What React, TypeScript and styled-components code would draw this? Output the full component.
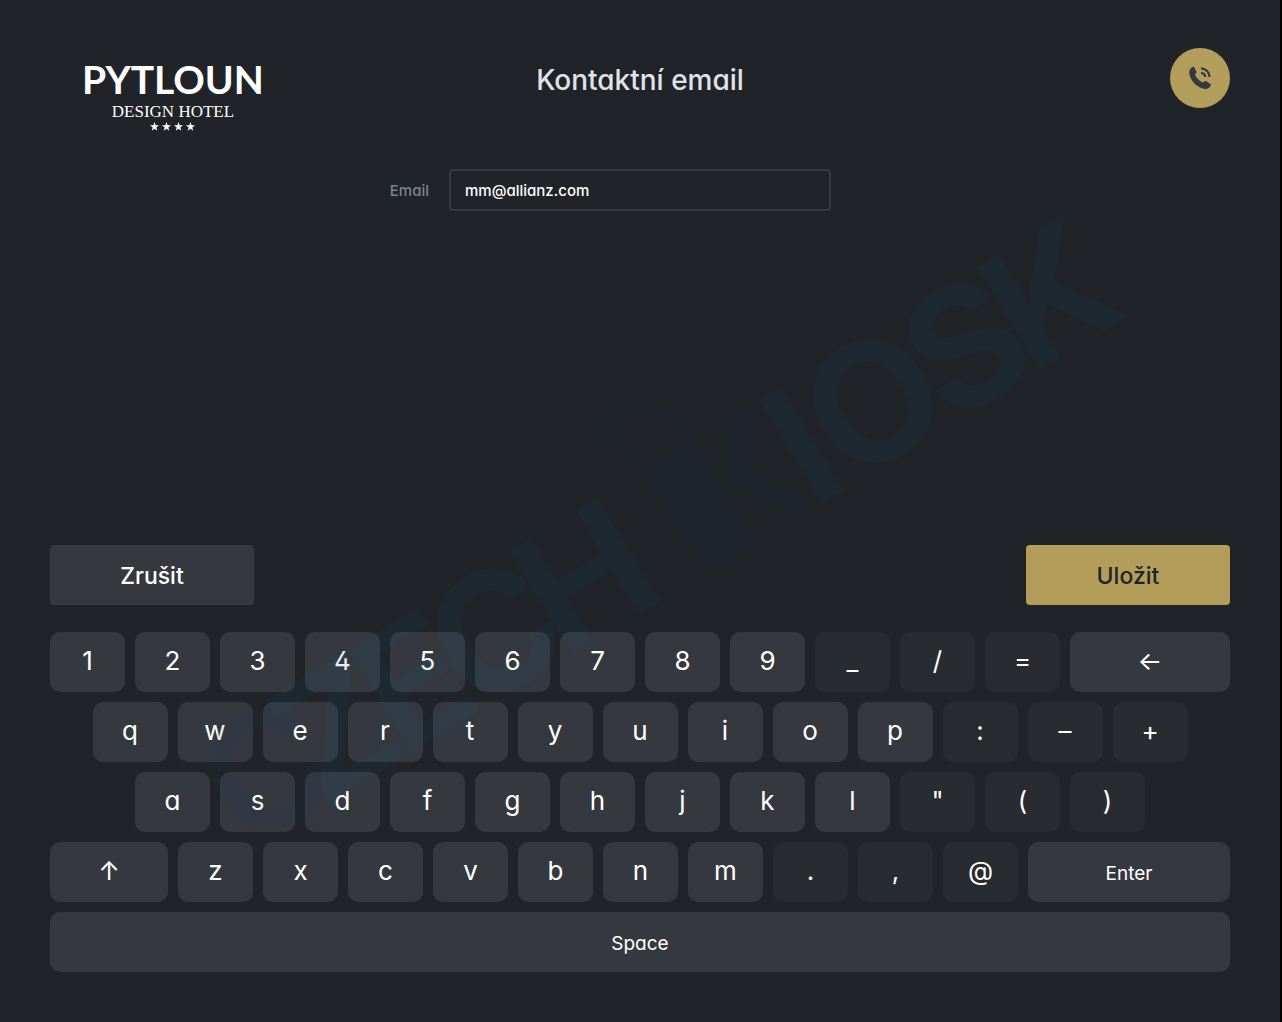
import React, { useState } from "react";
import styled, { createGlobalStyle, css } from "styled-components";

const GlobalStyle = createGlobalStyle`
  *, *::before, *::after { box-sizing: border-box; }
  body {
    margin: 0;
    background: #202327;
    color: #ffffff;
    font-family: Inter, "Open Sans", sans-serif;
    font-feature-settings: "cv11", "cv02";
  }
  button, input { font: inherit; font-feature-settings: inherit; color: inherit; }
`;

const Page = styled.div`
  position: relative;
  display: flex;
  flex-direction: column;
  min-height: 100vh;
  padding: 48px 50px 50px;
  border-right: 2px solid #000000;
  background: #202327;
`;

const Header = styled.header`
  display: grid;
  grid-template-columns: 1fr auto 1fr;
  align-items: start;
`;

const Brand = styled.div`
  display: flex;
  flex-direction: column;
  align-items: center;
  justify-self: start;
  margin: 8px 0 0 32px;
`;

const BrandName = styled.span`
  font: 700 39px/46px Lato, sans-serif;
`;

const BrandTagline = styled.span`
  font: 400 17px/20px "Liberation Serif", serif;
`;

const Stars = styled.svg`
  display: block;
`;

const Title = styled.h1`
  margin: 0;
  padding-top: 12px;
  font-size: 28px;
  line-height: 40px;
  font-weight: 500;
  color: #dfe3e8;
`;

const CallButton = styled.button`
  display: flex;
  align-items: center;
  justify-content: center;
  justify-self: end;
  width: 60px;
  height: 60px;
  padding: 0;
  border: 0;
  border-radius: 50%;
  background: #b39d5b;
  color: #35393f;
`;

const Form = styled.form`
  display: flex;
  flex: 1;
  flex-direction: column;
  padding-top: 38px;
`;

const Field = styled.div`
  display: grid;
  grid-template-columns: 1fr minmax(0, 382px) 1fr;
  column-gap: 20px;
  align-items: center;
  margin-bottom: auto;
`;

const Label = styled.label`
  justify-self: end;
  font-size: 15px;
  font-weight: 500;
  color: #7d8388;
`;

const TextInput = styled.input`
  width: 100%;
  height: 42px;
  padding: 0 14px;
  border: 2px solid #35383e;
  border-radius: 4px;
  outline: 0;
  background: transparent;
  font-size: 15px;
  font-weight: 500;
`;

const Actions = styled.div`
  display: flex;
  justify-content: space-between;
  margin: 24px 0 27px;
`;

const ActionButton = styled.button<{ $primary?: boolean }>`
  width: 204px;
  height: 60px;
  padding: 2px 0 0;
  border: 0;
  border-radius: 4px;
  font-size: 23px;
  font-weight: 500;
  background: ${(p) => (p.$primary ? "#b39d5b" : "#35393f")};
  color: ${(p) => (p.$primary ? "#202327" : "#ffffff")};
`;

const Keyboard = styled.div`
  display: flex;
  flex-direction: column;
  gap: 10px;
`;

const KeyRow = styled.div`
  display: flex;
  justify-content: center;
  gap: 10px;
`;

const Key = styled.button<{ $grow?: number; $dim?: boolean; $word?: boolean }>`
  flex: ${(p) => (p.$grow ? `${p.$grow} 1 0` : "0 1 75px")};
  min-width: 0;
  height: 60px;
  border: 0;
  border-radius: 10px;
  background: ${(p) => (p.$dim ? "#282b2f" : "#35393f")};
  ${(p) =>
    p.$word
      ? css`
          padding: 2px 0 0;
          font-size: 19px;
        `
      : css`
          padding: 0 0 4px;
          font-size: 26px;
        `}
`;

const Watermark = styled.svg`
  position: absolute;
  inset: 0;
  width: 100%;
  height: 100%;
  pointer-events: none;
`;

const WatermarkLetter = styled.text<{ $violet?: boolean }>`
  font: 700 167px Inter, sans-serif;
  text-anchor: middle;
  fill: ${(p) => (p.$violet ? "#1c3478" : "#056197")};
`;

const letters = [
  { char: "C", x: -453, violet: true },
  { char: "Z", x: -372 },
  { char: "E", x: -282 },
  { char: "C", x: -187 },
  { char: "H", x: -81 },
  { char: "I", x: 172 },
  { char: "O", x: 256 },
  { char: "S", x: 364 },
  { char: "K", x: 464 },
];

type KeySpec = { label: string; grow?: number; dim?: boolean; word?: boolean; name?: string };

const plain = (chars: string): KeySpec[] => chars.split("").map((label) => ({ label }));
const dim = (chars: string): KeySpec[] => chars.split("").map((label) => ({ label, dim: true }));

const rows: KeySpec[][] = [
  [...plain("123456789"), ...dim("_/="), { label: "←", grow: 1, name: "Backspace" }],
  [...plain("qwertyuiop"), ...dim(":–+")],
  [...plain("asdfghjkl"), ...dim('"()')],
  [
    { label: "↑", grow: 118, name: "Shift" },
    ...plain("zxcvbnm"),
    ...dim(".,@"),
    { label: "Enter", grow: 202, word: true },
  ],
  [{ label: "Space", grow: 1, word: true }],
];

const star = "M4.5 0 5.6 3.2 9 3.3 6.3 5.4 7.3 8.7 4.5 6.8 1.7 8.7 2.7 5.4 0 3.3 3.4 3.2Z";

function PhoneIcon() {
  return (
    <svg width="24" height="24" viewBox="0 0 24 24" aria-hidden="true">
      <path
        fill="currentColor"
        d="M6 1 8.3 5.2C8.7 6 8.6 6.6 8 7.2L6.9 8.6C8 11.5 11.5 15.3 15 16.6L16.6 15.4C17.2 15 17.8 15 18.5 15.4L22.4 18C23 18.4 23 19 22.6 19.6 21.5 22 19.5 23.2 17 23 9 22 1.5 14 1.2 6.5 1.2 3.8 2.8 1.8 4.8.8 5.3.6 5.7.6 6 1Z"
      />
      <path
        fill="none"
        stroke="currentColor"
        strokeWidth="2.2"
        d="M13 2.4A8.6 8.6 0 0 1 21.6 11M13 6.8A4.2 4.2 0 0 1 17.2 11"
      />
    </svg>
  );
}

export default function App() {
  const [email, setEmail] = useState("mm@allianz.com");
  const [upper, setUpper] = useState(false);

  const press = (key: KeySpec) => {
    if (key.name === "Backspace") setEmail((v) => v.slice(0, -1));
    else if (key.name === "Shift") setUpper((v) => !v);
    else if (key.label === "Space") setEmail((v) => v + " ");
    else if (key.label !== "Enter") setEmail((v) => v + (upper ? key.label.toUpperCase() : key.label));
  };

  return (
    <>
      <GlobalStyle />
      <Page>
        <Header>
          <Brand>
            <BrandName>PYTLOUN</BrandName>
            <BrandTagline>DESIGN HOTEL</BrandTagline>
            <Stars width="45" height="9" viewBox="0 0 45 9" fill="#ffffff" aria-hidden="true">
              {[0, 12, 24, 36].map((x) => (
                <path key={x} d={star} transform={`translate(${x} 0)`} />
              ))}
            </Stars>
          </Brand>
          <Title>Kontaktní email</Title>
          <CallButton type="button" aria-label="Zavolat">
            <PhoneIcon />
          </CallButton>
        </Header>
        <Form onSubmit={(e) => e.preventDefault()}>
          <Field>
            <Label htmlFor="email">Email</Label>
            <TextInput id="email" value={email} onChange={(e) => setEmail(e.target.value)} />
          </Field>
          <Actions>
            <ActionButton type="button">Zrušit</ActionButton>
            <ActionButton type="submit" $primary>
              Uložit
            </ActionButton>
          </Actions>
        </Form>
        <Keyboard>
          {rows.map((row, i) => (
            <KeyRow key={i}>
              {row.map((key) => (
                <Key
                  key={key.label}
                  type="button"
                  aria-label={key.name}
                  $grow={key.grow}
                  $dim={key.dim}
                  $word={key.word}
                  onClick={() => press(key)}
                >
                  {upper && !key.word ? key.label.toUpperCase() : key.label}
                </Key>
              ))}
            </KeyRow>
          ))}
        </Keyboard>
        <Watermark viewBox="0 0 1280 1022" aria-hidden="true">
          <g opacity="0.08">
            <g transform="translate(640 511) rotate(-31.3)">
              {letters.map((l) => (
                <WatermarkLetter key={l.x} x={l.x} y={88} $violet={l.violet}>
                  {l.char}
                </WatermarkLetter>
              ))}
            </g>
            <path
              d="M638 465Q672 458 694 437L757 542Q738 565 705 573Z"
              fill="#1e286e"
            />
            <path
              d="M638 463Q622 444 592 437Q612 412 642 407Q672 412 691 438"
              fill="none"
              stroke="#1e286e"
              strokeWidth="5"
            />
            <path d="M734 415 756 402 750 470 817 506 797 517 728 483Z" fill="#1e286e" />
          </g>
        </Watermark>
      </Page>
    </>
  );
}
